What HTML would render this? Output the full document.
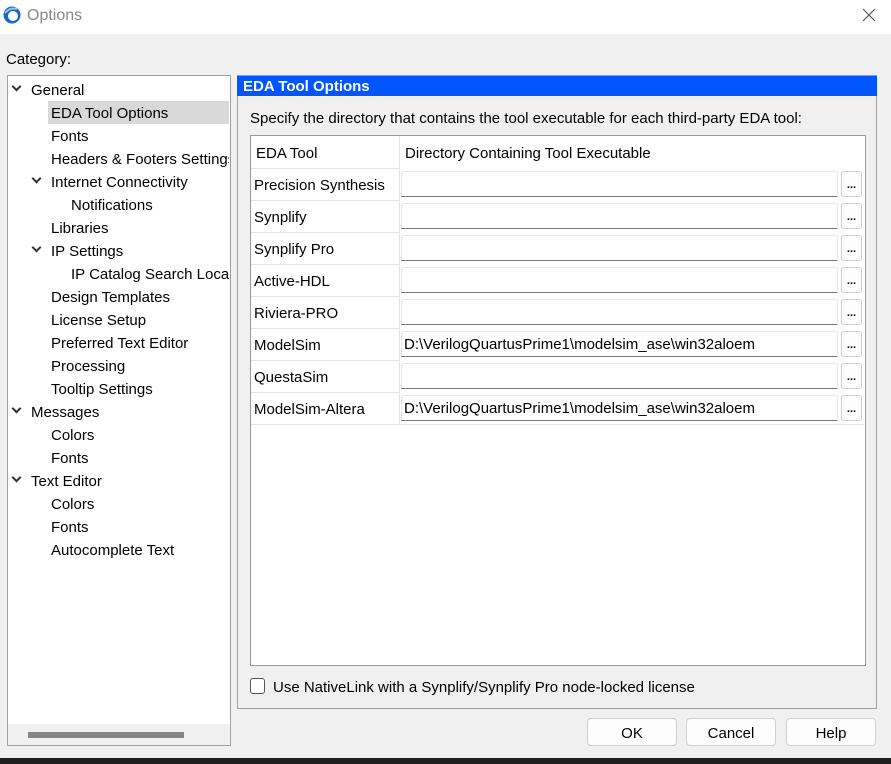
<!DOCTYPE html>
<html><head><meta charset="utf-8"><style>
*{margin:0;padding:0;box-sizing:border-box}
body{width:891px;height:764px;background:#f0f0f0;font-family:"Liberation Sans",sans-serif;font-size:15px;color:#000;position:relative;overflow:hidden}
.a{position:absolute;white-space:nowrap}
.t{position:absolute;white-space:nowrap;line-height:25px;height:23px}
.chev{position:absolute;width:7px;height:7px;border-right:2px solid #333;border-bottom:2px solid #333;transform:rotate(45deg)}
.inp{position:absolute;left:401px;width:437px;height:26px;background:#fff;border:1px solid #e6e6e6;border-bottom:1px solid #777;border-radius:3px 3px 0 0;padding-left:2px;line-height:26px}
.btn{position:absolute;left:841px;width:21px;height:26px;background:#fdfdfd;border:1px solid #d0d0d0;border-radius:3px;font-size:11px;text-align:center;line-height:26px;font-weight:bold}
.row{position:absolute;left:251px;width:148px;height:32px;line-height:34px;padding-left:3px;border-top:1px solid #e4e4e4}
.pb{position:absolute;top:718px;width:90px;height:28px;background:#fdfdfd;border:1px solid #d0d0d0;border-radius:4px;text-align:center;line-height:29px}
</style></head><body>
<div class="a" style="left:0;top:0;width:891px;height:34px;background:#fff"></div>
<svg class="a" style="left:2px;top:5px" width="20" height="20" viewBox="0 0 20 20"><circle cx="10" cy="10" r="8.5" fill="#1a66c8"/><circle cx="11" cy="11" r="5" fill="#fff"/><path d="M3 8 Q8 2 15 4" stroke="#9cc5f0" stroke-width="2" fill="none"/></svg>
<div class="a" style="left:27px;top:7px;font-size:16px;color:#888">Options</div>
<svg class="a" style="left:862px;top:8px" width="14" height="14"><path d="M1 1L13 13M13 1L1 13" stroke="#555" stroke-width="1.2"/></svg>
<div class="a" style="left:6px;top:51px">Category:</div>

<div class="a" style="left:7px;top:75px;width:224px;height:671px;background:#fff;border:1px solid #a0a0a0"></div>
<div class="a" style="left:8px;top:724px;width:222px;height:21px;background:#f0f0f0"></div>
<div class="a" style="left:28px;top:732px;width:156px;height:6px;background:#858585"></div>
<div class="a" style="left:48px;top:101px;width:181px;height:23px;background:#d9d9d9"></div>

<div class="chev" style="left:13px;top:83px"></div><div class="t" style="left:31px;top:78px">General</div>
<div class="t" style="left:51px;top:101px">EDA Tool Options</div>
<div class="t" style="left:51px;top:124px">Fonts</div>
<div class="t" style="left:51px;top:147px;width:178px;overflow:hidden">Headers &amp; Footers Settings</div>
<div class="chev" style="left:33px;top:175px"></div><div class="t" style="left:51px;top:170px">Internet Connectivity</div>
<div class="t" style="left:71px;top:193px">Notifications</div>
<div class="t" style="left:51px;top:216px">Libraries</div>
<div class="chev" style="left:33px;top:244px"></div><div class="t" style="left:51px;top:239px">IP Settings</div>
<div class="t" style="left:71px;top:262px;width:158px;overflow:hidden">IP Catalog Search Locations</div>
<div class="t" style="left:51px;top:285px">Design Templates</div>
<div class="t" style="left:51px;top:308px">License Setup</div>
<div class="t" style="left:51px;top:331px">Preferred Text Editor</div>
<div class="t" style="left:51px;top:354px">Processing</div>
<div class="t" style="left:51px;top:377px">Tooltip Settings</div>
<div class="chev" style="left:13px;top:405px"></div><div class="t" style="left:31px;top:400px">Messages</div>
<div class="t" style="left:51px;top:423px">Colors</div>
<div class="t" style="left:51px;top:446px">Fonts</div>
<div class="chev" style="left:13px;top:474px"></div><div class="t" style="left:31px;top:469px">Text Editor</div>
<div class="t" style="left:51px;top:492px">Colors</div>
<div class="t" style="left:51px;top:515px">Fonts</div>
<div class="t" style="left:51px;top:538px">Autocomplete Text</div>

<div class="a" style="left:237px;top:75px;width:640px;height:634px;border:1px solid #a0a0a0;border-top:none"></div>
<div class="a" style="left:237px;top:75px;width:640px;height:21px;background:#0055ff;border-top:1px solid #999;color:#fff;font-weight:bold;padding-left:6px;line-height:22px;font-size:15px">EDA Tool Options</div>
<div class="a" style="left:250px;top:110px">Specify the directory that contains the tool executable for each third-party EDA tool:</div>

<div class="a" style="left:250px;top:135px;width:616px;height:531px;background:#fff;border:1px solid #999"></div>
<div class="a" style="left:399px;top:136px;width:1px;height:288px;background:#e4e4e4"></div>
<div class="a" style="left:256px;top:145px">EDA Tool</div>
<div class="a" style="left:405px;top:145px">Directory Containing Tool Executable</div>

<div class="row" style="top:168px">Precision Synthesis</div><div class="inp" style="top:171px"></div><div class="btn" style="top:171px">...</div>
<div class="row" style="top:200px">Synplify</div><div class="inp" style="top:203px"></div><div class="btn" style="top:203px">...</div>
<div class="row" style="top:232px">Synplify Pro</div><div class="inp" style="top:235px"></div><div class="btn" style="top:235px">...</div>
<div class="row" style="top:264px">Active-HDL</div><div class="inp" style="top:267px"></div><div class="btn" style="top:267px">...</div>
<div class="row" style="top:296px">Riviera-PRO</div><div class="inp" style="top:299px"></div><div class="btn" style="top:299px">...</div>
<div class="row" style="top:328px">ModelSim</div><div class="inp" style="top:331px">D:\VerilogQuartusPrime1\modelsim_ase\win32aloem</div><div class="btn" style="top:331px">...</div>
<div class="row" style="top:360px">QuestaSim</div><div class="inp" style="top:363px"></div><div class="btn" style="top:363px">...</div>
<div class="row" style="top:392px">ModelSim-Altera</div><div class="inp" style="top:395px">D:\VerilogQuartusPrime1\modelsim_ase\win32aloem</div><div class="btn" style="top:395px">...</div>
<div class="a" style="left:251px;top:424px;width:613px;height:1px;background:#e4e4e4"></div>

<div class="a" style="left:250px;top:678px;width:15px;height:16px;border:1px solid #555;border-radius:3px;background:#fff"></div>
<div class="a" style="left:273px;top:679px">Use NativeLink with a Synplify/Synplify Pro node-locked license</div>

<div class="pb" style="left:587px">OK</div>
<div class="pb" style="left:686px">Cancel</div>
<div class="pb" style="left:786px">Help</div>
<div class="a" style="left:0;top:758px;width:891px;height:6px;background:#1e1e1e"></div>
</body></html>
